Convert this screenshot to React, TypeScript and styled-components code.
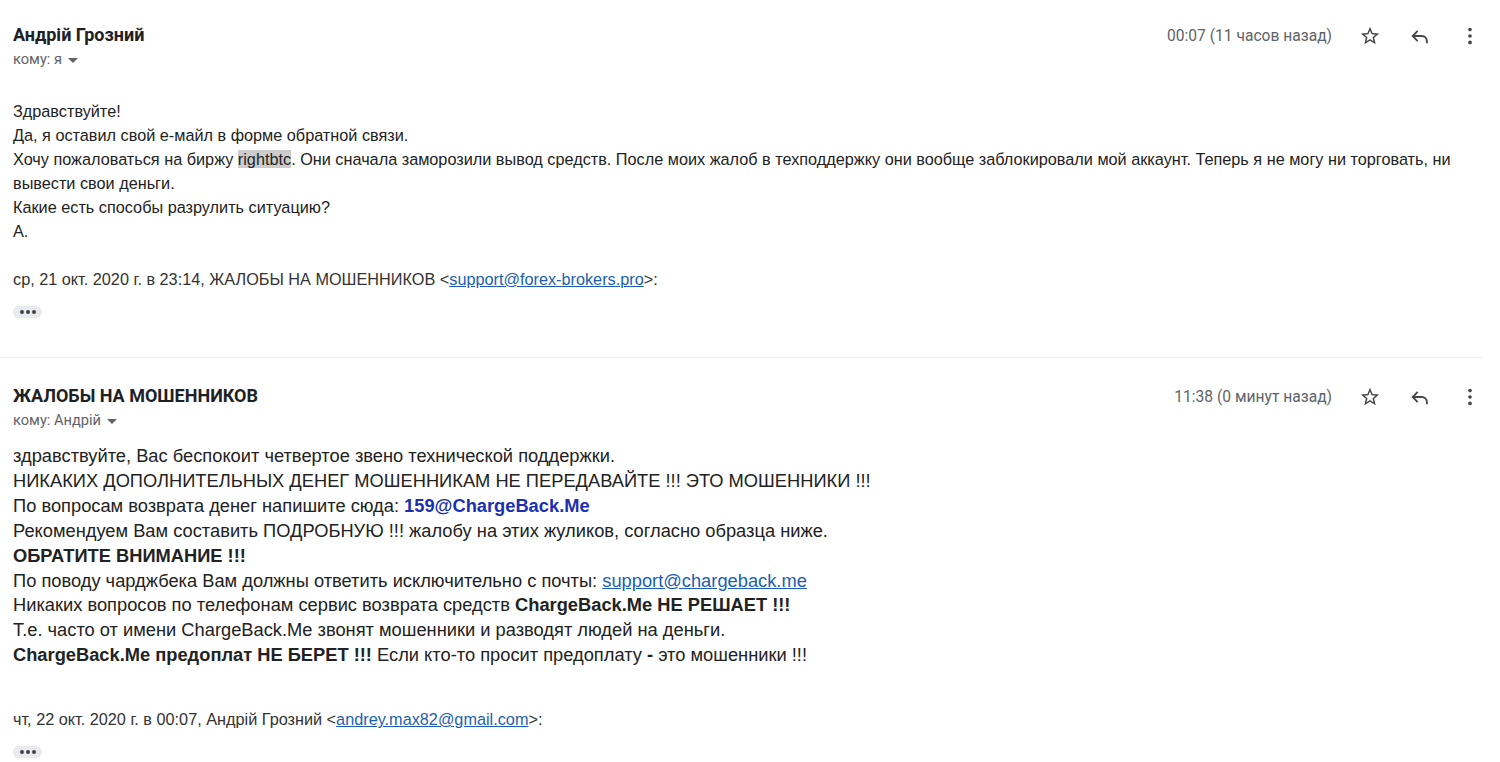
import { FC, ReactNode } from 'react';
import styled, { createGlobalStyle } from 'styled-components';

const GlobalStyle = createGlobalStyle`
  html, body {
    margin: 0;
    padding: 0;
    background: #ffffff;
  }
`;

const StyledPage = styled.div`
  width: 1500px;
  display: flex;
  flex-direction: column;
`;

const StyledMessage = styled.div<{ $top: number; $bottom: number }>`
  padding: ${({ $top }) => $top}px 5px ${({ $bottom }) => $bottom}px 13px;
`;

const StyledDivider = styled.div`
  height: 1px;
  margin-right: 17px;
  background: #ececec;
`;

const StyledHeader = styled.div`
  display: flex;
  justify-content: space-between;
  align-items: flex-start;
`;

const StyledSender = styled.div`
  display: flex;
  flex-direction: column;
  gap: 4px;
`;

const StyledName = styled.div`
  font-family: Roboto, 'Noto Sans', sans-serif;
  font-weight: 700;
  font-size: 18px;
  line-height: 20px;
  color: #202124;
`;

const StyledRecipient = styled.div`
  display: flex;
  align-items: center;
  gap: 6px;
  font-family: Roboto, 'Noto Sans', sans-serif;
  font-size: 14.6px;
  line-height: 20px;
  color: #5f6368;
`;

const StyledCaret = styled.span`
  width: 0;
  height: 0;
  border-left: 5px solid transparent;
  border-right: 5px solid transparent;
  border-top: 5px solid #5f6368;
  margin-top: 2px;
`;

const StyledActions = styled.div`
  display: flex;
  align-items: center;
  margin-top: -1px;
`;

const StyledTime = styled.span`
  font-family: Roboto, 'Noto Sans', sans-serif;
  font-size: 15.6px;
  line-height: 20px;
  color: #5f6368;
  margin-right: 13px;
`;

const StyledIconButton = styled.span`
  width: 50px;
  height: 24px;
  display: flex;
  align-items: center;
  justify-content: center;
  color: #444746;
`;

const StyledBody = styled.div<{ $size: number; $lh: number; $top: number }>`
  font-family: 'Liberation Sans', Arial, sans-serif;
  font-size: ${({ $size }) => $size}px;
  line-height: ${({ $lh }) => $lh}px;
  color: #222222;
  margin-top: ${({ $top }) => $top}px;
  padding-right: 20px;
`;

const StyledQuote = styled.div<{ $top: number }>`
  font-family: 'Liberation Sans', Arial, sans-serif;
  font-size: 16.25px;
  line-height: 24px;
  color: #333333;
  margin-top: ${({ $top }) => $top}px;
`;

const StyledLink = styled.a`
  color: #1a5fb4;
  text-decoration: underline;
`;

const StyledStrongLink = styled.span`
  color: #1c2fb3;
  font-weight: 700;
`;

const StyledMark = styled.span`
  background: #cccccc;
`;

const StyledMore = styled.div`
  margin-top: 15px;
  width: 29px;
  height: 12px;
  border-radius: 6px;
  background: #e8eaed;
  display: flex;
  align-items: center;
  justify-content: center;
  gap: 2px;
`;

const StyledDot = styled.span`
  width: 4px;
  height: 4px;
  border-radius: 50%;
  background: #444444;
`;

const StarIcon = () => (
  <svg width="22" height="22" viewBox="0 0 24 24" fill="currentColor">
    <path d="M22 9.24l-7.19-.62L12 2 9.19 8.63 2 9.24l5.46 4.73L5.82 21 12 17.27 18.18 21l-1.63-7.03L22 9.24zM12 15.4l-3.76 2.27 1-4.28-3.32-2.88 4.38-.38L12 6.1l1.71 4.04 4.38.38-3.32 2.88 1 4.28L12 15.4z" />
  </svg>
);

const ReplyIcon = () => (
  <svg width="22" height="22" viewBox="0 0 24 24" fill="none" stroke="currentColor" strokeWidth="2" strokeLinejoin="miter">
    <path d="M9.5 6.5L4 12l5.5 5.5" />
    <path d="M4.5 12H14a5.5 5.5 0 0 1 5.5 5.5V20" />
  </svg>
);

const MoreIcon = () => (
  <svg width="22" height="22" viewBox="0 0 24 24" fill="currentColor">
    <circle cx="12" cy="5" r="2" />
    <circle cx="12" cy="12" r="2" />
    <circle cx="12" cy="19" r="2" />
  </svg>
);

interface HeaderProps {
  name: string;
  to: string;
  time: string;
}

const MessageHeader: FC<HeaderProps> = ({ name, to, time }) => (
  <StyledHeader>
    <StyledSender>
      <StyledName>{name}</StyledName>
      <StyledRecipient>
        кому: {to}
        <StyledCaret />
      </StyledRecipient>
    </StyledSender>
    <StyledActions>
      <StyledTime>{time}</StyledTime>
      <StyledIconButton>
        <StarIcon />
      </StyledIconButton>
      <StyledIconButton>
        <ReplyIcon />
      </StyledIconButton>
      <StyledIconButton>
        <MoreIcon />
      </StyledIconButton>
    </StyledActions>
  </StyledHeader>
);

const MoreButton = () => (
  <StyledMore>
    <StyledDot />
    <StyledDot />
    <StyledDot />
  </StyledMore>
);

const Line: FC<{ children: ReactNode }> = ({ children }) => <div>{children}</div>;

export default function App() {
  return (
    <>
      <GlobalStyle />
      <StyledPage>
        <StyledMessage $top={25} $bottom={39}>
          <MessageHeader name="Андрій Грозний" to="я" time="00:07 (11 часов назад)" />
          <StyledBody $size={16.25} $lh={24} $top={30}>
            <Line>Здравствуйте!</Line>
            <Line>Да, я оставил свой е-майл в форме обратной связи.</Line>
            <Line>
              Хочу пожаловаться на биржу <StyledMark>rightbtc</StyledMark>. Они сначала заморозили
              вывод средств. После моих жалоб в техподдержку они вообще заблокировали мой аккаунт.
              Теперь я не могу ни торговать, ни вывести свои деньги.
            </Line>
            <Line>Какие есть способы разрулить ситуацию?</Line>
            <Line>А.</Line>
          </StyledBody>
          <StyledQuote $top={24}>
            ср, 21 окт. 2020 г. в 23:14, ЖАЛОБЫ НА МОШЕННИКОВ &lt;
            <StyledLink href="#">support@forex-brokers.pro</StyledLink>&gt;:
          </StyledQuote>
          <MoreButton />
        </StyledMessage>
        <StyledDivider />
        <StyledMessage $top={28} $bottom={8}>
          <MessageHeader name="ЖАЛОБЫ НА МОШЕННИКОВ" to="Андрій" time="11:38 (0 минут назад)" />
          <StyledBody $size={18.3} $lh={24.9} $top={14}>
            <Line>здравствуйте, Вас беспокоит четвертое звено технической поддержки.</Line>
            <Line>НИКАКИХ ДОПОЛНИТЕЛЬНЫХ ДЕНЕГ МОШЕННИКАМ НЕ ПЕРЕДАВАЙТЕ !!! ЭТО МОШЕННИКИ !!!</Line>
            <Line>
              По вопросам возврата денег напишите сюда: <StyledStrongLink>159@ChargeBack.Me</StyledStrongLink>
            </Line>
            <Line>Рекомендуем Вам составить ПОДРОБНУЮ !!! жалобу на этих жуликов, согласно образца ниже.</Line>
            <Line>
              <b>ОБРАТИТЕ ВНИМАНИЕ !!!</b>
            </Line>
            <Line>
              По поводу чарджбека Вам должны ответить исключительно с почты:{' '}
              <StyledLink href="#">support@chargeback.me</StyledLink>
            </Line>
            <Line>
              Никаких вопросов по телефонам сервис возврата средств <b>ChargeBack.Me НЕ РЕШАЕТ !!!</b>
            </Line>
            <Line>Т.е. часто от имени ChargeBack.Me звонят мошенники и разводят людей на деньги.</Line>
            <Line>
              <b>ChargeBack.Me предоплат НЕ БЕРЕТ !!!</b> Если кто-то просит предоплату <b>-</b> это
              мошенники !!!
            </Line>
          </StyledBody>
          <StyledQuote $top={39}>
            чт, 22 окт. 2020 г. в 00:07, Андрій Грозний &lt;
            <StyledLink href="#">andrey.max82@gmail.com</StyledLink>&gt;:
          </StyledQuote>
          <MoreButton />
        </StyledMessage>
      </StyledPage>
    </>
  );
}
